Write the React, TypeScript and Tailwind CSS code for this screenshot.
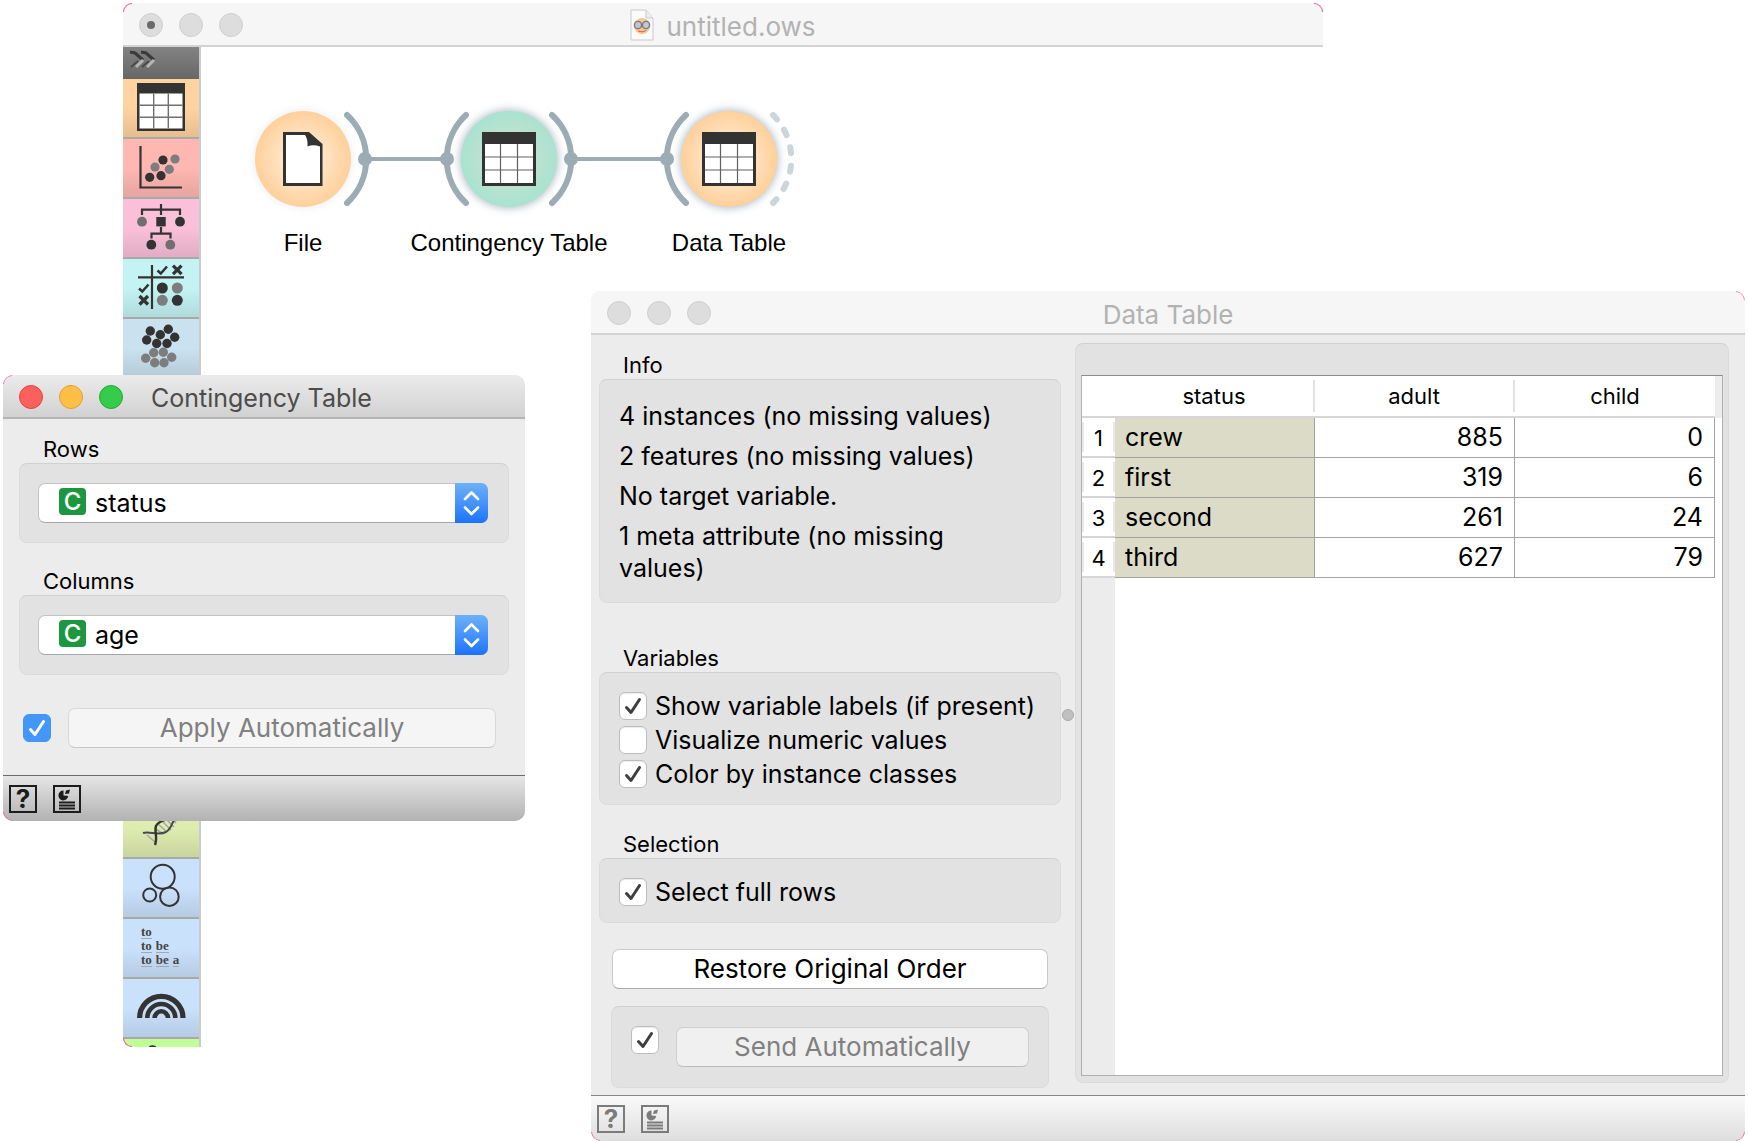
import React, { useId } from "react";

const DARK = "#333333";
const GREY = "#7d7d7d";

/* ---------- shared pieces ---------- */

type CornerName = "tl" | "tr" | "bl" | "br";

const cornerClasses: Record<CornerName, string> = {
  tl: "left-0 top-0 rounded-tl-[10px] border-l border-t",
  tr: "right-0 top-0 rounded-tr-[10px] border-r border-t",
  bl: "bottom-0 left-0 rounded-bl-[10px] border-b border-l",
  br: "bottom-0 right-0 rounded-br-[10px] border-b border-r",
};

function Corners({ at }: { at: CornerName[] }) {
  return (
    <>
      {at.map((c) => (
        <span
          key={c}
          aria-hidden="true"
          className={`pointer-events-none absolute size-[9px] border-[#f0509c] ${cornerClasses[c]}`}
        />
      ))}
    </>
  );
}

function TrafficLights({ active, edited }: { active?: boolean; edited?: boolean }) {
  const idle = "border-[#cfcfcf] bg-[#dddddd]";
  const base = "flex size-6 items-center justify-center rounded-full border";
  return (
    <div className="flex flex-1 gap-4 pl-4">
      <button type="button" aria-label="Close" className={`${base} ${active ? "border-[#e2463f] bg-[#fc605c]" : idle}`}>
        {edited && <span className="size-2 rounded-full bg-[#6a6a6a]" />}
      </button>
      <button type="button" aria-label="Minimize" className={`${base} ${active ? "border-[#dfa033] bg-[#fdbf45]" : idle}`} />
      <button type="button" aria-label="Zoom" className={`${base} ${active ? "border-[#25a934] bg-[#35cb4b]" : idle}`} />
    </div>
  );
}

function CheckBox({ id, checked, label, blue }: { id?: string; checked?: boolean; label?: string; blue?: boolean }) {
  return (
    <span className="grid size-7 shrink-0">
      <input
        id={id}
        type="checkbox"
        defaultChecked={checked}
        aria-label={label}
        className={`peer size-7 appearance-none rounded-[6px] border [grid-area:1/1] ${
          blue ? "border-[#4095f5] bg-[#4497f8]" : "border-[#bdbdbd] bg-white shadow-[inset_0_1px_1px_rgba(0,0,0,0.08)]"
        }`}
      />
      <svg
        viewBox="0 0 28 28"
        className="pointer-events-none hidden size-7 [grid-area:1/1] peer-checked:block"
        fill="none"
        stroke={blue ? "#ffffff" : "#3f3f3f"}
        strokeWidth="3"
        strokeLinecap="round"
        strokeLinejoin="round"
      >
        <path d="M7.5 15.5 12 20.5 20.5 7.5" />
      </svg>
    </span>
  );
}

function Group({ children, className = "" }: { children: React.ReactNode; className?: string }) {
  return (
    <div className={`rounded-[8px] border border-[#dbdbdb] border-t-[#d0d0d0] bg-[#e2e2e2] ${className}`}>{children}</div>
  );
}

function ReportIcon({ className = "" }: { className?: string }) {
  return (
    <svg viewBox="0 0 28 28" className={`size-7 ${className}`}>
      <rect x="1" y="1" width="26" height="26" fill="none" stroke="currentColor" strokeWidth="2" />
      <path d="M10.5 10.5 V5.6 A4.9 4.9 0 1 0 15.2 11 Z" fill="currentColor" />
      <path d="M12 9 L13 5.5 L17 4.5 L16 8.5 Z" fill="currentColor" />
      <path d="M6 17.5H22M6 20.5H22M6 23.5H22" stroke="currentColor" strokeWidth="2" />
    </svg>
  );
}

function FooterTools() {
  return (
    <div className="flex items-center">
      <button
        type="button"
        aria-label="Help"
        className="flex size-7 items-center justify-center border-2 border-current font-[Inter,sans-serif] text-[26px] leading-6 font-bold"
      >
        ?
      </button>
      <button type="button" aria-label="Report" className="ml-4">
        <ReportIcon />
      </button>
    </div>
  );
}

/* ---------- toolbox icons, all on a 76 x 58 field ---------- */

function TableGlyph() {
  return (
    <>
      <rect x="14" y="4" width="48" height="48" fill={DARK} />
      <rect x="16.5" y="14.5" width="43" height="35" fill="#fff" />
      <path d="M30.7 14.5V49.5M45.3 14.5V49.5M16.5 26.2H59.5M16.5 38.2H59.5" stroke="#707070" strokeWidth="1.4" />
    </>
  );
}

function Dots({ r, color, points }: { r: number; color: string; points: number[][] }) {
  return (
    <>
      {points.map(([x, y]) => (
        <circle key={`${x}-${y}`} cx={x} cy={y} r={r} fill={color} />
      ))}
    </>
  );
}

function ScatterGlyph() {
  return (
    <>
      <path d="M17.5 7V48.5H59" fill="none" stroke={DARK} strokeWidth="2.2" />
      <Dots r={4.6} color={GREY} points={[[32, 28], [46.3, 30.3], [52, 20]]} />
      <Dots r={4.6} color={DARK} points={[[26.7, 38.3], [38, 36.7], [40, 21]]} />
    </>
  );
}

function TreeGlyph() {
  return (
    <>
      <path
        d="M38 5V16M19 16V10.7H57V16M38 28V34.7M28.5 39.5V34.7H47.5V39.5"
        fill="none"
        stroke={DARK}
        strokeWidth="2.2"
      />
      <rect x="33.3" y="18" width="9.4" height="9.4" fill={DARK} />
      <Dots r={4.9} color="#6f6f6f" points={[[19, 22.7], [47.3, 45.7]]} />
      <Dots r={4.9} color={DARK} points={[[57, 22.7], [28.3, 45.7]]} />
    </>
  );
}

function EvaluateGlyph() {
  return (
    <>
      <path d="M29 6V50M15 18.4H61" stroke={DARK} strokeWidth="2.2" />
      <path
        d="M34.5 11.5 37.8 14.5 44 7.5M16 29.5 19.3 32.5 25.5 25.5"
        fill="none"
        stroke={DARK}
        strokeWidth="2.6"
      />
      <path d="M50 6.700 58.500 15.200M58.500 6.700 50 15.200M16.500 37 25 45.500M25 37 16.500 45.500" stroke={DARK} strokeWidth="3.3" />
      <Dots r={5.5} color={DARK} points={[[39.3, 29], [54.3, 41.3]]} />
      <Dots r={5.5} color={GREY} points={[[54.3, 29], [39.3, 41.3]]} />
    </>
  );
}

function ClusterGlyph() {
  return (
    <>
      <Dots
        r={4.7}
        color={DARK}
        points={[[27.3, 12], [45.3, 10.3], [37.3, 15.7], [51.7, 18.3], [23.7, 21], [33.7, 24.5], [44, 24.5]]}
      />
      <Dots
        r={4.7}
        color={GREY}
        points={[[30.7, 33.7], [40.3, 33.3], [22.7, 39.3], [48.7, 38.3], [31.7, 43.7], [41, 43.7]]}
      />
    </>
  );
}

function DnaGlyph() {
  return (
    <>
      <path d="M24 36 32 43M33 30 40 35M35 25 44 33M38 21 48 31M43 20 51 28M48 18 53 24" stroke="#a5a5a5" strokeWidth="1.6" />
      <path d="M20 34C27 32 35 37 43 33C52 28 47 14 62 20" fill="none" stroke="#4a4a4a" strokeWidth="2" />
      <path d="M32 46C35 38 31 32 33 27C37 18 50 24 55 10" fill="none" stroke={DARK} strokeWidth="2.4" />
    </>
  );
}

function BubblesGlyph() {
  return (
    <g fill="none" stroke={DARK} strokeWidth="2">
      <circle cx="39.7" cy="17.7" r="12" />
      <circle cx="26.7" cy="36" r="6.5" />
      <circle cx="46.4" cy="37.7" r="9.3" />
    </g>
  );
}

function RainbowGlyph() {
  return (
    <g fill="none" stroke={DARK}>
      <path d="M16.6 39A21.7 21.7 0 0 1 60 39" strokeWidth="5.2" />
      <path d="M24.3 39A14 14 0 0 1 52.3 39" strokeWidth="4.6" />
      <path d="M31.6 39A6.7 6.7 0 0 1 45 39" strokeWidth="4.6" />
    </g>
  );
}

function TextLines() {
  return (
    <span className="flex w-full flex-col gap-px pb-[3px] pl-[18px] text-left font-['Liberation_Serif',serif] text-[13px] leading-3 font-bold text-[#444444]">
      {[["to"], ["to", "be"], ["to", "be", "a"]].map((words, i) => (
        <span key={i} className="flex gap-1">
          {words.map((w) => (
            <span key={w} className="border-b border-[#9fa8b3]">
              {w}
            </span>
          ))}
        </span>
      ))}
    </span>
  );
}

type Category = { name: string; color: string; glyph?: React.ReactNode; text?: boolean };

const categories: Category[] = [
  { name: "Data", color: "bg-[#ffd39f]", glyph: <TableGlyph /> },
  { name: "Visualize", color: "bg-[#ffb7b1]", glyph: <ScatterGlyph /> },
  { name: "Model", color: "bg-[#fac0d9]", glyph: <TreeGlyph /> },
  { name: "Evaluate", color: "bg-[#c3f3f3]", glyph: <EvaluateGlyph /> },
  { name: "Unsupervised", color: "bg-[#cae1ef]", glyph: <ClusterGlyph /> },
  { name: "Associate", color: "bg-[#cae1ef]" },
  { name: "Prototypes", color: "bg-[#cae1ef]" },
  { name: "Time Series", color: "bg-[#cae1ef]" },
  { name: "Geo", color: "bg-[#cae1ef]" },
  { name: "Educational", color: "bg-[#cae1ef]" },
  { name: "Image Analytics", color: "bg-[#cae1ef]" },
  { name: "Spectra", color: "bg-[#cae1ef]" },
  { name: "Bioinformatics", color: "bg-[#dfecb0]", glyph: <DnaGlyph /> },
  { name: "Networks", color: "bg-[#cae1fc]", glyph: <BubblesGlyph /> },
  { name: "Text Mining", color: "bg-[#cae1fc]", text: true },
  { name: "Spectroscopy", color: "bg-[#cae1fc]", glyph: <RainbowGlyph /> },
];

function Toolbox() {
  return (
    <nav aria-label="Widget categories" className="w-[78px] shrink-0 overflow-hidden rounded-bl-[10px] border-r-2 border-[#c9cbcd]">
      <button
        type="button"
        aria-label="Expand toolbox"
        className="block h-8 w-full bg-linear-to-b from-[#838383] to-[#676767]"
      >
        <svg viewBox="0 0 76 32" className="h-8 w-full" fill="none" strokeWidth="3">
          <path d="M7 5 12 6 20 13M18 5 23 6 31 13" stroke="#3a3a3a" />
          <path d="M20 13 13 20M31 13 24 20" stroke="#b5b5b5" />
          <path d="M15 14 8 20M26 14 19 20" stroke="#4a4a4a" strokeWidth="2" />
        </svg>
      </button>
      {categories.map((c) => (
        <button
          key={c.name}
          type="button"
          aria-label={c.name}
          className={`block h-[60px] w-full border-b-2 border-[#a9a9a9] bg-linear-to-b from-transparent from-50% to-black/10 ${c.color}`}
        >
          {c.text ? (
            <TextLines />
          ) : (
            <svg viewBox="0 0 76 58" className="h-[58px] w-full">
              {c.glyph}
            </svg>
          )}
        </button>
      ))}
      <button type="button" aria-label="Single cell" className="block h-2 w-full bg-[#c0ff97]">
        <svg viewBox="0 0 76 8" className="h-2 w-full">
          <ellipse cx="29.5" cy="8" rx="3.5" ry="1.8" fill={DARK} />
        </svg>
      </button>
    </nav>
  );
}

/* ---------- workflow canvas ---------- */

function NodeTable({ x }: { x: number }) {
  return (
    <g transform={`translate(${x} 85)`}>
      <rect width="54" height="54" fill={DARK} />
      <rect x="3" y="12" width="48" height="39" fill="#fff" />
      <path d="M18.5 12V51M35.5 12V51M3 25H51M3 38H51" stroke="#606060" strokeWidth="1.2" />
    </g>
  );
}

function Workflow() {
  const labels = [
    { text: "File", place: "left-[2px]" },
    { text: "Contingency Table", place: "left-[208px]" },
    { text: "Data Table", place: "left-[428px]" },
  ];
  return (
    <main className="relative flex-1 bg-white">
      <svg viewBox="0 0 700 180" className="absolute top-0 left-0 h-[180px] w-[700px]">
        <defs>
          <radialGradient id="nodeOrange">
            <stop offset="0" stopColor="#ffefdd" />
            <stop offset="0.4" stopColor="#ffe5c8" />
            <stop offset="1" stopColor="#ffd09a" />
          </radialGradient>
          <radialGradient id="nodeGreen">
            <stop offset="0" stopColor="#cfe2d6" />
            <stop offset="0.5" stopColor="#c0e1d3" />
            <stop offset="1" stopColor="#a8e3cf" />
          </radialGradient>
          <filter id="nodeGlow" x="-20%" y="-20%" width="140%" height="140%">
            <feGaussianBlur stdDeviation="4" />
          </filter>
        </defs>
        <g fill="none" stroke="#9cacb5" strokeWidth="6" strokeLinecap="round">
          <path d="M146 68A60 60 0 0 1 146 156" />
          <path d="M265 68A60 60 0 0 0 265 156" />
          <path d="M351 68A60 60 0 0 1 351 156" />
          <path d="M485 68A60 60 0 0 0 485 156" />
          <path d="M572 68A62 62 0 0 1 572 156" stroke="#ccd5da" strokeDasharray="6 12.5" />
          <path d="M164 112H246M370 112H466" strokeWidth="4" strokeLinecap="butt" />
        </g>
        <Dots r={7} color="#9cacb5" points={[[164, 112], [246, 112], [370, 112], [466, 112]]} />
        <circle cx="102" cy="112" r="48" fill="#c3ccd2" opacity="0.4" filter="url(#nodeGlow)" />
        <circle cx="308" cy="112" r="49" fill="#9aa9b3" opacity="0.8" filter="url(#nodeGlow)" />
        <circle cx="528" cy="112" r="49" fill="#9aa9b3" opacity="0.8" filter="url(#nodeGlow)" />
        <circle cx="102" cy="112" r="48" fill="url(#nodeOrange)" />
        <circle cx="308" cy="112" r="48" fill="url(#nodeGreen)" />
        <circle cx="528" cy="112" r="48" fill="url(#nodeOrange)" />
        <path d="M82 85H108L121.500 97V139H82Z" fill={DARK} />
        <path d="M85 88H104Q107 92 106.500 99.500Q112 97 119 99.500V136H85Z" fill="#fff" />
        <NodeTable x={281} />
        <NodeTable x={501} />
      </svg>
      {labels.map((l) => (
        <span
          key={l.text}
          className={`absolute top-[181px] w-[200px] text-center font-['Liberation_Sans',sans-serif] text-[24px] leading-[30px] whitespace-nowrap text-black ${l.place}`}
        >
          {l.text}
        </span>
      ))}
    </main>
  );
}

function DocumentIcon() {
  return (
    <svg viewBox="0 0 24 32" className="h-8 w-6">
      <path d="M1 1H16L23 9V31H1Z" fill="#fbfbfb" stroke="#c9c9c9" />
      <path d="M16 1V9H23" fill="#eee" stroke="#c9c9c9" />
      <circle cx="12" cy="17" r="8" fill="#f7c693" />
      <circle cx="8" cy="16" r="3.6" fill="#c3c8d2" stroke="#77777f" strokeWidth="1.4" />
      <circle cx="16" cy="16" r="3.6" fill="#c3c8d2" stroke="#77777f" strokeWidth="1.4" />
      <path d="M8 22Q12 24 16 21.500" fill="none" stroke="#c46a4a" />
    </svg>
  );
}

function CanvasWindow() {
  return (
    <section aria-label="untitled.ows" className="relative mt-[3px] mr-[425px] ml-[123px] flex flex-col self-start [grid-area:1/1]">
      <header className="flex h-11 items-center rounded-t-[10px] border-b-2 border-[#d3d3d3] bg-[#f6f6f6] pt-[2px]">
        <TrafficLights edited />
        <h1 className="flex items-center gap-3 text-[26px] text-[#b2b2b2]">
          <DocumentIcon />
          <span className="pt-[3px]">untitled.ows</span>
        </h1>
        <div className="flex-1 pl-4" />
      </header>
      <div className="flex">
        <Toolbox />
        <Workflow />
      </div>
      <Corners at={["tl", "tr", "bl"]} />
    </section>
  );
}

/* ---------- contingency table window ---------- */

function VariableSelect({ title, value }: { title: string; value: string }) {
  const id = useId();
  return (
    <div>
      <label htmlFor={id} className="block pt-[3px] pl-6 text-[22px] leading-7">
        {title}
      </label>
      <Group className="py-[19px] pr-5 pl-[18px]">
        <div className="relative">
          <select
            id={id}
            defaultValue={value}
            className="block h-10 w-full appearance-none rounded-[7px] border border-[#c3c3c3] border-b-[#a5a5a5] bg-white pl-[56px] text-[25px] leading-9 text-black"
          >
            <option>{value}</option>
          </select>
          <span
            aria-hidden="true"
            className="pointer-events-none absolute top-[5px] left-[21px] flex size-[27px] items-center justify-center rounded-[4px] bg-[#1d9641] text-[24px] leading-[27px] font-medium text-white"
          >
            C
          </span>
          <span className="pointer-events-none absolute inset-y-0 right-0 flex w-[33px] items-center justify-center rounded-r-[7px] bg-linear-to-b from-[#6db1f8] to-[#1b72fa]">
            <svg viewBox="0 0 33 40" className="h-10 w-[33px]" fill="none" stroke="#fff" strokeWidth="2.6" strokeLinecap="round" strokeLinejoin="round">
              <path d="M10 16 16.500 9.500 23 16M10 24.500 16.500 31 23 24.500" />
            </svg>
          </span>
        </div>
      </Group>
    </div>
  );
}

function ContingencyWindow() {
  return (
    <section
      aria-label="Contingency Table"
      className="relative mt-[375px] ml-[3px] w-[522px] self-start overflow-hidden rounded-[10px] bg-[#ececec] [grid-area:1/1]"
    >
      <header className="flex h-11 items-center border-b-2 border-[#b5b5b5] bg-linear-to-b from-[#ebebeb] to-[#d2d2d2] pt-[2px]">
        <div className="flex w-[148px]">
          <TrafficLights active />
        </div>
        <h2 className="pt-[3px] text-[25px] text-[#4c4c4c]">Contingency Table</h2>
      </header>
      <div className="flex flex-col gap-[21px] px-4 pt-[13px]">
        <VariableSelect title="Rows" value="status" />
        <VariableSelect title="Columns" value="age" />
      </div>
      <div className="mt-[33px] flex items-center gap-[17px] pr-[29px] pl-5">
        <CheckBox checked blue label="Apply Automatically" />
        <button
          type="button"
          disabled
          className="h-10 flex-1 rounded-[7px] border border-[#d9d9d9] border-b-[#c6c6c6] bg-[#f5f5f5] text-[26px] leading-9 text-[#808080]"
        >
          Apply Automatically
        </button>
      </div>
      <footer className="mt-[27px] flex h-[46px] items-center border-t border-[#6c6c6c] bg-linear-to-b from-[#e6e6e6] to-[#b2b2b2] pl-[6px] text-[#1c1c1c]">
        <FooterTools />
      </footer>
      <Corners at={["tl", "bl"]} />
    </section>
  );
}

/* ---------- data table window ---------- */

function CheckRow({ text, checked }: { text: string; checked?: boolean }) {
  const id = useId();
  return (
    <div className="flex items-center gap-2">
      <CheckBox id={id} checked={checked} />
      <label htmlFor={id} className="text-[25px] leading-7 whitespace-nowrap">
        {text}
      </label>
    </div>
  );
}

const rows: [string, number, number][] = [
  ["crew", 885, 0],
  ["first", 319, 6],
  ["second", 261, 24],
  ["third", 627, 79],
];

function DataGrid() {
  return (
    <div className="flex flex-1 flex-col border border-[#b0b0b0] border-t-[#8c8c8c] bg-white">
      <div className="flex bg-[#ececec]">
        <div className="min-w-0 flex-1">
          <table className="w-full table-fixed border-separate border-spacing-0 bg-white text-[25px]">
            <thead>
              <tr className="h-[42px] text-[22px]">
                <th className="w-[33px] border-b-2 border-[#d6d6d6]" aria-label="Row" />
                {["status", "adult", "child"].map((h, i) => (
                  <th key={h} scope="col" className="h-[42px] border-b-2 border-[#d6d6d6] p-0 font-normal">
                    <div className={`h-8 leading-8 ${i < 2 ? "border-r-2 border-[#e2e2e2]" : ""}`}>{h}</div>
                  </th>
                ))}
              </tr>
            </thead>
            <tbody>
              {rows.map(([name, adult, child], i) => (
                <tr key={name} className="h-10">
                  <th scope="row" className="border-b-2 border-[#d6d6d6] p-0 text-[22px] font-normal">
                    <div className="h-[30px] border-x-2 border-[#e8e8e8] leading-8">{i + 1}</div>
                  </th>
                  <td className="border-r border-b border-[#a3a3a3] bg-[#dcdbc8] px-[10px] pt-0 pb-[2px] leading-9">{name}</td>
                  <td className="border-r border-b border-[#a3a3a3] px-[11px] pt-0 pb-[2px] text-right leading-9">{adult}</td>
                  <td className="border-r border-b border-[#a3a3a3] px-[11px] pt-0 pb-[2px] text-right leading-9">{child}</td>
                </tr>
              ))}
            </tbody>
          </table>
        </div>
        <div className="flex w-[7px] flex-col">
          <div className="h-[42px]" />
          <div className="flex-1 bg-white" />
        </div>
      </div>
      <div className="w-[33px] flex-1 bg-[#ececec]" />
    </div>
  );
}

function DataWindow() {
  return (
    <section
      aria-label="Data Table"
      className="relative mt-[291px] mr-[3px] ml-[591px] flex flex-col self-start overflow-hidden rounded-[10px] bg-[#ececec] [grid-area:1/1]"
    >
      <header className="flex h-11 items-center border-b-2 border-[#d3d3d3] bg-[#f6f6f6] pt-[2px]">
        <TrafficLights />
        <h2 className="pt-[3px] text-[26px] text-[#b2b2b2]">Data Table</h2>
        <div className="flex-1 pl-4" />
      </header>
      <div className="flex">
        <div className="flex w-[470px] shrink-0 flex-col pt-4 pl-2">
          <h3 className="pl-6 text-[22px] leading-7">Info</h3>
          <Group className="flex flex-col gap-2 pt-5 pr-12 pb-[18px] pl-[19px] text-[25px] leading-8">
            <p>4 instances (no missing values)</p>
            <p>2 features (no missing values)</p>
            <p>No target variable.</p>
            <p>1 meta attribute (no missing values)</p>
          </Group>
          <h3 className="mt-[41px] pl-6 text-[22px] leading-7">Variables</h3>
          <Group className="flex flex-col gap-[6px] pt-[19px] pb-4 pl-[19px]">
            <CheckRow text="Show variable labels (if present)" checked />
            <CheckRow text="Visualize numeric values" />
            <CheckRow text="Color by instance classes" checked />
          </Group>
          <h3 className="mt-[25px] pl-6 text-[22px] leading-7">Selection</h3>
          <Group className="pt-[19px] pb-4 pl-[19px]">
            <CheckRow text="Select full rows" checked />
          </Group>
          <button
            type="button"
            className="mx-[13px] mt-[26px] h-10 rounded-[7px] border border-[#c9c9c9] border-b-[#ababab] bg-white text-[26px] leading-9"
          >
            Restore Original Order
          </button>
          <Group className="mx-3 mt-[17px] mb-[7px] flex items-start gap-[17px] px-[19px] pt-[19px] pb-[20px]">
            <CheckBox checked label="Send Automatically" />
            <button
              type="button"
              disabled
              className="mt-[1px] h-10 flex-1 rounded-[7px] border border-[#cfcfcf] border-b-[#bdbdbd] bg-[#f0f0f0] text-[26px] leading-9 text-[#808080]"
            >
              Send Automatically
            </button>
          </Group>
        </div>
        <div className="flex w-[14px] shrink-0 items-center justify-center">
          <span className="size-3 rounded-full border border-[#a9a9a9] bg-[#c0c0c0]" />
        </div>
        <Group className="mt-2 mr-4 mb-3 flex min-w-0 flex-1 flex-col px-[5px] pt-[31px] pb-[6px]">
          <DataGrid />
        </Group>
      </div>
      <footer className="flex h-[46px] items-center border-t border-[#868686] bg-linear-to-b from-[#fafafa] to-[#dedede] pl-[6px] text-[#7b7b7b]">
        <FooterTools />
      </footer>
      <Corners at={["tr", "bl", "br"]} />
    </section>
  );
}

export default function App() {
  return (
    <div className="grid min-h-screen bg-white font-[Inter,sans-serif] text-black">
      <CanvasWindow />
      <ContingencyWindow />
      <DataWindow />
    </div>
  );
}
